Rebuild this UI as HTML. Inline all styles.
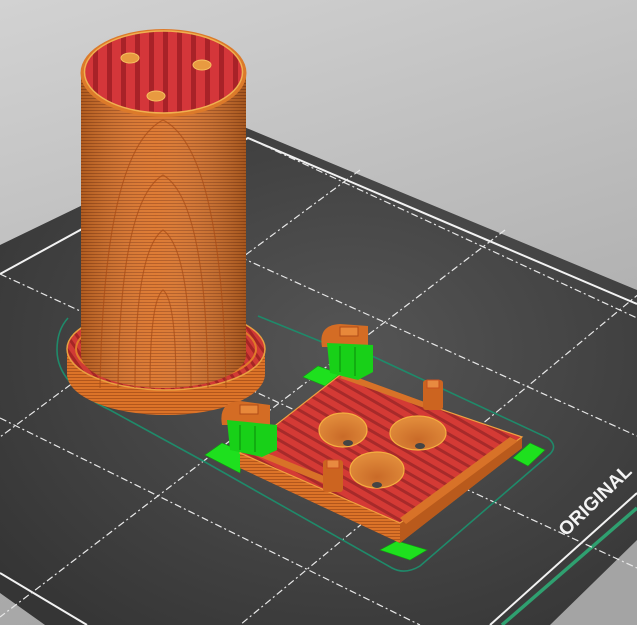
<!DOCTYPE html>
<html><head><meta charset="utf-8"><style>
html,body{margin:0;padding:0;width:637px;height:625px;overflow:hidden;background:#bdbdbd}
svg{display:block}
</style></head><body>
<svg width="637" height="625" viewBox="0 0 637 625" xmlns="http://www.w3.org/2000/svg">
<defs>
<linearGradient id="bg" x1="0" y1="0" x2="0.3" y2="1">
<stop offset="0" stop-color="#d2d2d2"/><stop offset="1" stop-color="#a4a4a4"/></linearGradient>
<radialGradient id="bed" cx="0.55" cy="0.45" r="0.7">
<stop offset="0" stop-color="#555"/><stop offset="1" stop-color="#353535"/></radialGradient>
<pattern id="stripeH" width="6" height="3" patternUnits="userSpaceOnUse">
<rect width="6" height="3" fill="#dc7328"/><rect y="2" width="6" height="1" fill="#b2561c"/></pattern>
<linearGradient id="cylShade" x1="0" y1="0" x2="1" y2="0">
<stop offset="0" stop-color="#000" stop-opacity="0.2"/><stop offset="0.45" stop-color="#fff" stop-opacity="0.06"/><stop offset="1" stop-color="#000" stop-opacity="0.25"/></linearGradient>
<pattern id="redV" width="14" height="10" patternUnits="userSpaceOnUse">
<rect width="14" height="10" fill="#d4363a"/><rect x="9" width="5" height="10" fill="#a82228"/></pattern>
<pattern id="redD" width="9" height="9" patternUnits="userSpaceOnUse" patternTransform="rotate(30)">
<rect width="9" height="9" fill="#d43a35"/><rect y="6" width="9" height="3" fill="#a72a2a"/></pattern>
<pattern id="redB" width="8" height="8" patternUnits="userSpaceOnUse" patternTransform="rotate(-35)">
<rect width="8" height="8" fill="#d03a35"/><rect x="5" width="3" height="8" fill="#a52525"/></pattern>
<radialGradient id="bowl" cx="0.5" cy="0.7" r="0.6"><stop offset="0" stop-color="#c96a28"/><stop offset="1" stop-color="#e08a3a"/></radialGradient>
</defs>
<rect width="637" height="625" fill="url(#bg)"/>
<polygon points="244,127 637,290 637,540 550,625 45,625 0,593 0,245" fill="url(#bed)"/>
<polyline points="0,274 248,138 637,304" fill="none" stroke="#f2f2f2" stroke-width="2"/>
<line x1="637" y1="493" x2="490" y2="625" stroke="#f2f2f2" stroke-width="2"/>
<line x1="637" y1="508" x2="502" y2="625" stroke="#2fa070" stroke-width="3.5"/>
<line x1="0" y1="573" x2="87" y2="625" stroke="#f2f2f2" stroke-width="2"/>
<g stroke="#e8e8e8" stroke-width="1.2" stroke-dasharray="7 3 2 3" fill="none">
<line x1="248" y1="138" x2="637" y2="318"/>
<line x1="240" y1="257" x2="637" y2="436"/>
<line x1="0" y1="274" x2="637" y2="568"/>
<line x1="0" y1="418" x2="420" y2="625"/>
<line x1="360" y1="170" x2="0" y2="437"/>
<line x1="505" y1="230" x2="0" y2="617"/>
<line x1="640" y1="293" x2="240" y2="625"/>
</g>
<text x="566" y="537" transform="rotate(-44 566 537)" font-family="Liberation Sans, sans-serif" font-weight="bold" font-size="19" fill="#f4f4f4">ORIGINAL</text>
<path d="M258,316 L322,342 L372,356 L548,438 Q558,446 550,454 L420,566 Q405,575 392,568 L205,462 L110,410 Q57,385 57,350 Q57,330 68,318" fill="none" stroke="#1f8a6a" stroke-width="1.6"/>
<path d="M67,349 A99,41 0 0 0 265,349 L265,374 A99,41 0 0 1 67,374 Z" fill="url(#stripeH)"/>
<ellipse cx="166" cy="349" rx="99" ry="41" fill="url(#redB)" stroke="#e8a040" stroke-width="1.5"/>
<ellipse cx="166" cy="349" rx="90" ry="35" fill="none" stroke="#e07a2a" stroke-width="2"/>
<path d="M81,73 L246,73 L246,355 A82.5,33 0 0 1 81,355 Z" fill="url(#stripeH)"/>
<path d="M81,73 L246,73 L246,355 A82.5,33 0 0 1 81,355 Z" fill="url(#cylShade)"/>
<g fill="none" stroke="#a84c16" stroke-width="1.2" opacity="0.7">
<path d="M150,388 Q150,300 163,290 Q176,300 176,388"/>
<path d="M135,388 Q135,250 163,230 Q191,250 191,388"/>
<path d="M118,388 Q120,200 163,175 Q206,200 208,388"/>
<path d="M100,388 Q104,150 163,120 Q222,150 226,388"/>
</g>
<ellipse cx="163.5" cy="73" rx="83" ry="44" fill="#dc7a2a"/>
<ellipse cx="163.5" cy="72" rx="79" ry="41" fill="url(#redV)" stroke="#f0b050" stroke-width="1.5"/>
<g fill="#e89a40" stroke="#f5c060" stroke-width="1"><ellipse cx="130" cy="58" rx="9" ry="5"/><ellipse cx="202" cy="65" rx="9" ry="5"/><ellipse cx="156" cy="96" rx="9" ry="5"/></g>
<g fill="#1ee01e" stroke="#10a010" stroke-width="0.6">
<polygon points="303,377 318,366 340,374 325,386"/>
<polygon points="205,455 222,443 243,452 240,473"/>
<polygon points="380,550 397,541 427,550 410,560"/>
<polygon points="513,458 530,443 545,450 528,466"/>
</g>
<polygon points="240,453 400,523 522,437 522,448 400,543 240,468" fill="#d06a22"/>
<polygon points="240,453 400,523 400,543 240,468" fill="url(#stripeH)"/>
<polygon points="400,523 522,437 522,448 400,543" fill="#b95a1c"/>
<polygon points="240,453 340,375 522,437 400,523" fill="url(#redD)" stroke="#f0a040" stroke-width="1.2"/>
<polygon points="400,518 510,437 518,441 406,524" fill="#d87228"/>
<polyline points="248,452 330,486 334,480 252,447" fill="#d87228"/>
<polyline points="340,378 430,410 430,404 345,373" fill="#d87228"/>
<g stroke="#f5b040" stroke-width="1.2">
<ellipse cx="343" cy="430" rx="24" ry="17" fill="url(#bowl)"/>
<ellipse cx="418" cy="433" rx="28" ry="17" fill="url(#bowl)"/>
<ellipse cx="377" cy="470" rx="27" ry="18" fill="url(#bowl)"/>
</g>
<g fill="#444"><ellipse cx="348" cy="443" rx="5" ry="3"/><ellipse cx="420" cy="446" rx="5" ry="3"/><ellipse cx="377" cy="485" rx="5" ry="3"/></g>
<rect x="423" y="380" width="20" height="30" rx="3" fill="#cc6420"/><rect x="427" y="380" width="12" height="8" fill="#e88a40" stroke="#c85020"/>
<rect x="323" y="460" width="20" height="32" rx="3" fill="#cc6420"/><rect x="327" y="460" width="12" height="8" fill="#e88a40" stroke="#c85020"/>
<path d="M322,347 Q318,325 340,324 L368,326 L368,347 Z" fill="#d46c24"/>
<rect x="340" y="327" width="18" height="9" fill="#e8883a" stroke="#b04c18"/>
<polygon points="327,343 373,345 373,372 358,380 330,373" fill="#18d018"/>
<path d="M222,425 Q218,402 240,401 L270,405 L270,425 Z" fill="#d46c24"/>
<rect x="240" y="405" width="18" height="9" fill="#e8883a" stroke="#b04c18"/>
<polygon points="227,420 277,425 277,450 262,457 230,450" fill="#18d018"/>
<g stroke="#0a8a0a" stroke-width="1"><line x1="240" y1="425" x2="240" y2="450"/><line x1="255" y1="426" x2="255" y2="452"/><line x1="340" y1="346" x2="340" y2="372"/><line x1="355" y1="347" x2="355" y2="376"/></g>
</svg>
</body></html>
